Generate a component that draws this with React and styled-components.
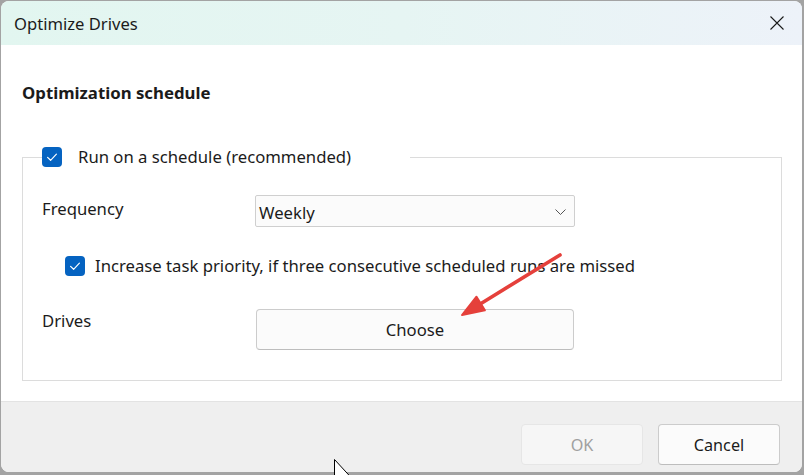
import React from 'react';
import styled, { createGlobalStyle } from 'styled-components';

const Global = createGlobalStyle`
  html, body { margin: 0; padding: 0; }
  body {
    background: #a3a3a3;
    width: 804px;
    height: 475px;
    overflow: hidden;
    font-family: "Segoe UI", "Noto Sans", "Liberation Sans", sans-serif;
    color: #1b1b1b;
  }
`;

const Screen = styled.div`
  position: relative;
  width: 804px;
  height: 475px;
  padding: 1px 2px 3px 1px;
  box-sizing: border-box;
`;

const Window = styled.div`
  height: 100%;
  display: flex;
  flex-direction: column;
  background: #fff;
  border-radius: 8px;
  overflow: hidden;
`;

const TitleBar = styled.div`
  height: 44px;
  flex: none;
  display: flex;
  align-items: center;
  justify-content: space-between;
  padding: 0 18px 0 13px;
  background: linear-gradient(90deg, #e2f6f0 0%, #e6f5f3 50%, #edf2f9 100%);
`;

const Title = styled.div`
  font-size: 16.6px;
  line-height: 20px;
  margin-top: 1px;
`;

const CloseBtn = styled.div`
  width: 14px;
  height: 14px;
  display: flex;
`;

const Body = styled.div`
  flex: 1;
  padding: 38px 20px 20px 21px;
  display: flex;
  flex-direction: column;
`;

const Heading = styled.h1`
  margin: 0 0 44px 0;
  font-size: 16.8px;
  line-height: 20px;
  font-weight: 700;
`;

const Group = styled.fieldset`
  margin: 0;
  padding: 0 0 30px 19px;
  border: 1px solid #dcdcdc;
  min-width: 0;
`;

const Legend = styled.legend`
  padding: 0;
  width: 368px;
  height: 20px;
  display: flex;
  align-items: center;
  gap: 16px;
`;

const BoxMark = styled.span`
  width: 20px;
  height: 20px;
  flex: none;
  border-radius: 4px;
  background: #0563c1;
  display: flex;
  align-items: center;
  justify-content: center;
`;

const Text = styled.span`
  font-size: 16.7px;
  line-height: 20px;
  white-space: nowrap;
`;

const FieldRow = styled.div`
  display: grid;
  grid-template-columns: 213px auto;
  align-items: start;
  margin-top: ${p => p.$top}px;
`;

const FieldLabel = styled.div`
  font-size: 16.7px;
  line-height: 22px;
  padding-top: ${p => p.$pad}px;
`;

const Select = styled.div`
  width: 320px;
  height: 32px;
  box-sizing: border-box;
  border: 1px solid #cfcfcf;
  border-radius: 2px;
  background: #fbfbfb;
  display: flex;
  align-items: center;
  justify-content: space-between;
  padding: 2px 8px 0 3px;
  font-size: 16.7px;
`;

const CheckRow = styled.div`
  margin-top: 29px;
  padding-left: 23px;
  display: flex;
  align-items: center;
  gap: 10px;
`;

const Button = styled.div`
  box-sizing: border-box;
  width: ${p => p.$w}px;
  height: 41px;
  margin-left: ${p => p.$ml || 0}px;
  border: 1px solid ${p => (p.$disabled ? '#e6e6e6' : '#cccccc')};
  border-bottom-color: ${p => (p.$disabled ? '#e6e6e6' : '#bdbdbd')};
  border-radius: 4px;
  background: ${p => (p.$disabled ? '#f6f6f6' : '#fbfbfb')};
  color: ${p => (p.$disabled ? '#a0a0a0' : '#1b1b1b')};
  display: flex;
  align-items: center;
  justify-content: center;
  font-size: ${p => p.$fs || 16.7}px;
`;

const Footer = styled.div`
  height: 71px;
  flex: none;
  box-sizing: border-box;
  border-top: 1px solid #e3e3e3;
  background: #efefef;
  display: flex;
  justify-content: flex-end;
  align-items: flex-start;
  gap: 15px;
  padding: 22px 22px 0 0;
`;

const Overlay = styled.svg`
  position: absolute;
  left: ${p => p.$x}px;
  top: ${p => p.$y}px;
  pointer-events: none;
  overflow: visible;
`;

const Check = () => (
  <svg width="20" height="20" viewBox="0 0 20 20">
    <path d="M5.6 10.4 L8.6 13.3 L14.4 7.2" fill="none" stroke="#fff" strokeWidth="1.2" strokeLinecap="round" strokeLinejoin="round" />
  </svg>
);

export default function App() {
  return (
    <>
      <Global />
      <Screen>
        <Window>
          <TitleBar>
            <Title>Optimize Drives</Title>
            <CloseBtn>
              <svg width="14" height="14" viewBox="0 0 14 14">
                <path d="M0.5 0.5 L13.5 13.5 M13.5 0.5 L0.5 13.5" stroke="#1b1b1b" strokeWidth="1.1" />
              </svg>
            </CloseBtn>
          </TitleBar>
          <Body>
            <Heading>Optimization schedule</Heading>
            <Group>
              <Legend>
                <BoxMark><Check /></BoxMark>
                <Text>Run on a schedule (recommended)</Text>
              </Legend>
              <FieldRow $top={28}>
                <FieldLabel $pad={3}>Frequency</FieldLabel>
                <Select>
                  <span>Weekly</span>
                  <svg width="11" height="6" viewBox="0 0 11 6">
                    <path d="M0.5 0.5 L5.5 5.5 L10.5 0.5" fill="none" stroke="#555" strokeWidth="1" />
                  </svg>
                </Select>
              </FieldRow>
              <CheckRow>
                <BoxMark><Check /></BoxMark>
                <Text>Increase task priority, if three consecutive scheduled runs are missed</Text>
              </CheckRow>
              <FieldRow $top={33}>
                <FieldLabel $pad={1}>Drives</FieldLabel>
                <Button $w={318} $ml={1}>Choose</Button>
              </FieldRow>
            </Group>
          </Body>
          <Footer>
            <Button $w={122} $disabled $fs={16.2}>OK</Button>
            <Button $w={122} $fs={16.2}>Cancel</Button>
          </Footer>
        </Window>
        <Overlay $x={455} $y={248} width="112" height="74" viewBox="0 0 112 74">
          <line x1="105" y1="7" x2="22" y2="58" stroke="#e5403b" strokeWidth="3.6" strokeLinecap="round" />
          <polygon points="7,67 21.5,48.7 29.9,62.3" fill="#e5403b" stroke="#e5403b" strokeWidth="2" strokeLinejoin="round" />
        </Overlay>
        <Overlay $x={334} $y={459} width="20" height="30" viewBox="0 0 20 30">
          <polygon points="0.5,0.5 0.5,23 5.9,17.9 9.9,27 12.6,25.8 8.6,16.8 15.5,16.8" fill="#fff" stroke="#000" strokeWidth="1" strokeLinejoin="miter" />
        </Overlay>
      </Screen>
    </>
  );
}
